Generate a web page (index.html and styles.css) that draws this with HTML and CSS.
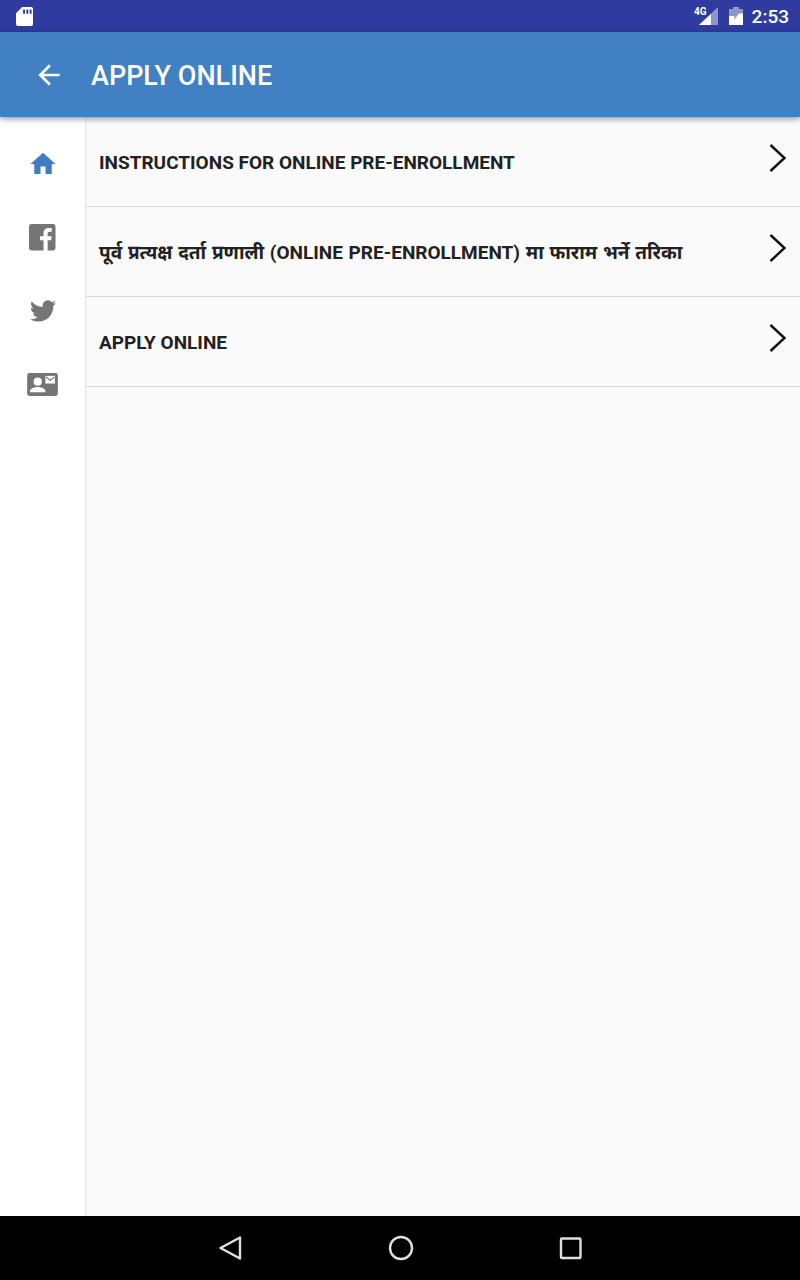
FILE: index.html
```html
<!DOCTYPE html>
<html lang="en">
<head>
    <meta charset="UTF-8">
    <meta name="viewport" content="width=device-width, initial-scale=1.0">
    <title>Apply Online</title>
    <link rel="stylesheet" href="styles.css">
</head>
<body>
    <div class="status-bar">
        <svg class="sd-icon" width="17" height="19" viewBox="0 0 18 20"><path fill="#fff" fill-rule="evenodd" d="M6.500 0H16a2 2 0 0 1 2 2v16a2 2 0 0 1-2 2H2a2 2 0 0 1-2-2V6.500zM7.500 2.500v4.500h2V2.500zm3.500 0v4.500h2V2.500zm3.500 0v4.500h2V2.500z"/></svg>
        <div class="status-right">
            <span class="net-label">4G</span>
            <svg class="signal" width="20" height="20" viewBox="0 0 20 20"><path fill="#8f96cf" d="M19 1v18H0z"/><path fill="#fff" d="M12 8v11H0z"/></svg>
            <svg class="battery" width="14" height="18" viewBox="0 0 14 18"><path fill="#8f96cf" d="M4 0h6v2h4v16H0V2h4z"/><path fill="#fff" d="M0 9h5.500L5 13l5-6.500h4V18H0z"/></svg>
            <span class="clock">2:53</span>
        </div>
    </div>

    <header class="app-bar">
        <svg class="back" width="32" height="32" viewBox="0 0 24 24"><path fill="#fff" d="M20 11H7.830l5.590-5.590L12 4l-8 8 8 8 1.410-1.410L7.830 13H20v-2z"/></svg>
        <h1>APPLY ONLINE</h1>
    </header>

    <div class="content">
        <nav class="side">
            <a class="side-item"><svg width="30" height="30" viewBox="0 0 24 24"><path fill="#3f7cc4" d="M10 20v-6h4v6h5v-8h3L12 3 2 12h3v8z"/></svg></a>
            <a class="side-item"><svg width="26.500" height="26.500" viewBox="1.500 2 27 27"><path fill="#757575" d="M4 2h22a2.500 2.500 0 0 1 2.500 2.500v22A2.500 2.500 0 0 1 26 29h-5.500V18.500H24l.6-4h-4.100V12c0-1.200.4-2 2-2h2.200V6.400c-.5-.1-1.700-.2-3.100-.2-3.200 0-5.300 1.900-5.300 5.400v2.900h-3.500v4h3.500V29H4a2.500 2.500 0 0 1-2.500-2.500v-22A2.500 2.500 0 0 1 4 2z"/></svg></a>
            <a class="side-item"><svg width="26" height="26" viewBox="0 0 24 24"><path fill="#757575" d="M23.950 4.570a10 10 0 0 1-2.820.77 4.960 4.960 0 0 0 2.160-2.720c-.95.550-2 .96-3.130 1.190a4.920 4.920 0 0 0-8.380 4.480C7.690 8.100 4.070 6.130 1.640 3.160a4.820 4.820 0 0 0-.67 2.480c0 1.710.87 3.210 2.190 4.100a4.900 4.900 0 0 1-2.230-.620v.060a4.920 4.920 0 0 0 3.950 4.830 5 5 0 0 1-2.210.080 4.940 4.940 0 0 0 4.600 3.420A9.870 9.870 0 0 1 0 19.540a14 14 0 0 0 7.560 2.210c9.050 0 14-7.500 14-13.980 0-.21 0-.42-.02-.63a9.930 9.930 0 0 0 2.410-2.570z"/></svg></a>
            <a class="side-item"><svg width="31" height="23" viewBox="0 0 32 24"><path fill="#757575" d="M2.500 0h27A2.500 2.500 0 0 1 32 2.500v19a2.500 2.500 0 0 1-2.500 2.500h-27A2.500 2.500 0 0 1 0 21.500v-19A2.500 2.500 0 0 1 2.500 0z"/><circle cx="11" cy="9" r="4.300" fill="#fff"/><path fill="#fff" d="M3 20v-1.500c0-2.600 5.300-4 8-4s8 1.400 8 4V20z"/><path fill="#fff" d="M19 3h10v8H19z"/><path fill="none" stroke="#757575" stroke-width="1.200" d="M19.500 4l4.500 3.500L28.500 4"/></svg></a>
        </nav>
        <main class="list">
            <a class="row">
                <span class="row-text">INSTRUCTIONS FOR ONLINE PRE-ENROLLMENT</span>
                <svg class="chevron" width="20" height="30" viewBox="0 0 20 30"><path fill="none" stroke="#111" stroke-width="2.400" d="M2.500 2l14 13-14 13"/></svg>
            </a>
            <a class="row">
                <span class="row-text mixed">पूर्व प्रत्यक्ष दर्ता प्रणाली (ONLINE PRE-ENROLLMENT) मा फाराम भर्ने तरिका</span>
                <svg class="chevron" width="20" height="30" viewBox="0 0 20 30"><path fill="none" stroke="#111" stroke-width="2.400" d="M2.500 2l14 13-14 13"/></svg>
            </a>
            <a class="row">
                <span class="row-text">APPLY ONLINE</span>
                <svg class="chevron" width="20" height="30" viewBox="0 0 20 30"><path fill="none" stroke="#111" stroke-width="2.400" d="M2.500 2l14 13-14 13"/></svg>
            </a>
        </main>
    </div>

    <footer class="nav-bar">
        <svg width="26" height="26" viewBox="0 0 26 26"><path fill="none" stroke="#e0e0e0" stroke-width="2.400" stroke-linejoin="round" d="M22 2.500v21L2.500 13z"/></svg>
        <svg width="26" height="26" viewBox="0 0 26 26"><circle cx="13" cy="13" r="11" fill="none" stroke="#e0e0e0" stroke-width="2.400"/></svg>
        <svg width="24" height="24" viewBox="0 0 24 24"><rect x="3" y="2.500" width="19.500" height="19.500" rx="1" fill="none" stroke="#e0e0e0" stroke-width="2.400"/></svg>
    </footer>
</body>
</html>
```
FILE: styles.css
```css
* {
    box-sizing: border-box;
}

body {
    margin: 0;
    height: 1280px;
    display: flex;
    flex-direction: column;
    font-family: 'Roboto', 'Noto Sans', sans-serif;
    background-color: #fafafa;
    overflow: hidden;
}

.status-bar {
    height: 32px;
    flex: none;
    display: flex;
    align-items: center;
    justify-content: space-between;
    padding: 0 11px 0 16px;
    background-color: #303b9f;
    color: #fff;
}

.status-right {
    display: flex;
    align-items: center;
}

.net-label {
    font-size: 10px;
    font-weight: 700;
    margin: -9px -8px 0 0;
}

.signal {
    margin-right: 10px;
}

.battery {
    margin-right: 9px;
}

.clock {
    font-size: 19px;
    font-weight: 500;
}

.app-bar {
    height: 85px;
    flex: none;
    display: flex;
    align-items: center;
    padding-left: 33px;
    background-color: #4280c4;
    box-shadow: 0 2px 6px rgba(0, 0, 0, 0.4);
    position: relative;
}

.app-bar h1 {
    margin: 2px 0 0 26px;
    font-size: 27px;
    font-weight: 500;
    color: #fff;
}

.content {
    flex: 1;
    display: flex;
}

.side {
    width: 86px;
    flex: none;
    display: flex;
    flex-direction: column;
    padding-top: 10px;
    background-color: #fff;
    border-right: 1px solid #e4e4e4;
}

.side-item {
    height: 73.500px;
    display: flex;
    align-items: center;
    justify-content: center;
}

.list {
    flex: 1;
}

.row {
    height: 90px;
    display: flex;
    align-items: center;
    justify-content: space-between;
    padding: 0 12px 0 13px;
    border-bottom: 1px solid #d9d9d9;
}

.row-text {
    margin-top: 2px;
    font-size: 19px;
    font-weight: 700;
    color: #212121;
}

.row-text.mixed {
    margin-top: 0;
    word-spacing: 1px;
}

.chevron {
    margin-top: -8px;
}

.nav-bar {
    height: 64px;
    flex: none;
    display: flex;
    align-items: center;
    justify-content: center;
    gap: 144px;
    background-color: #000;
}
```
